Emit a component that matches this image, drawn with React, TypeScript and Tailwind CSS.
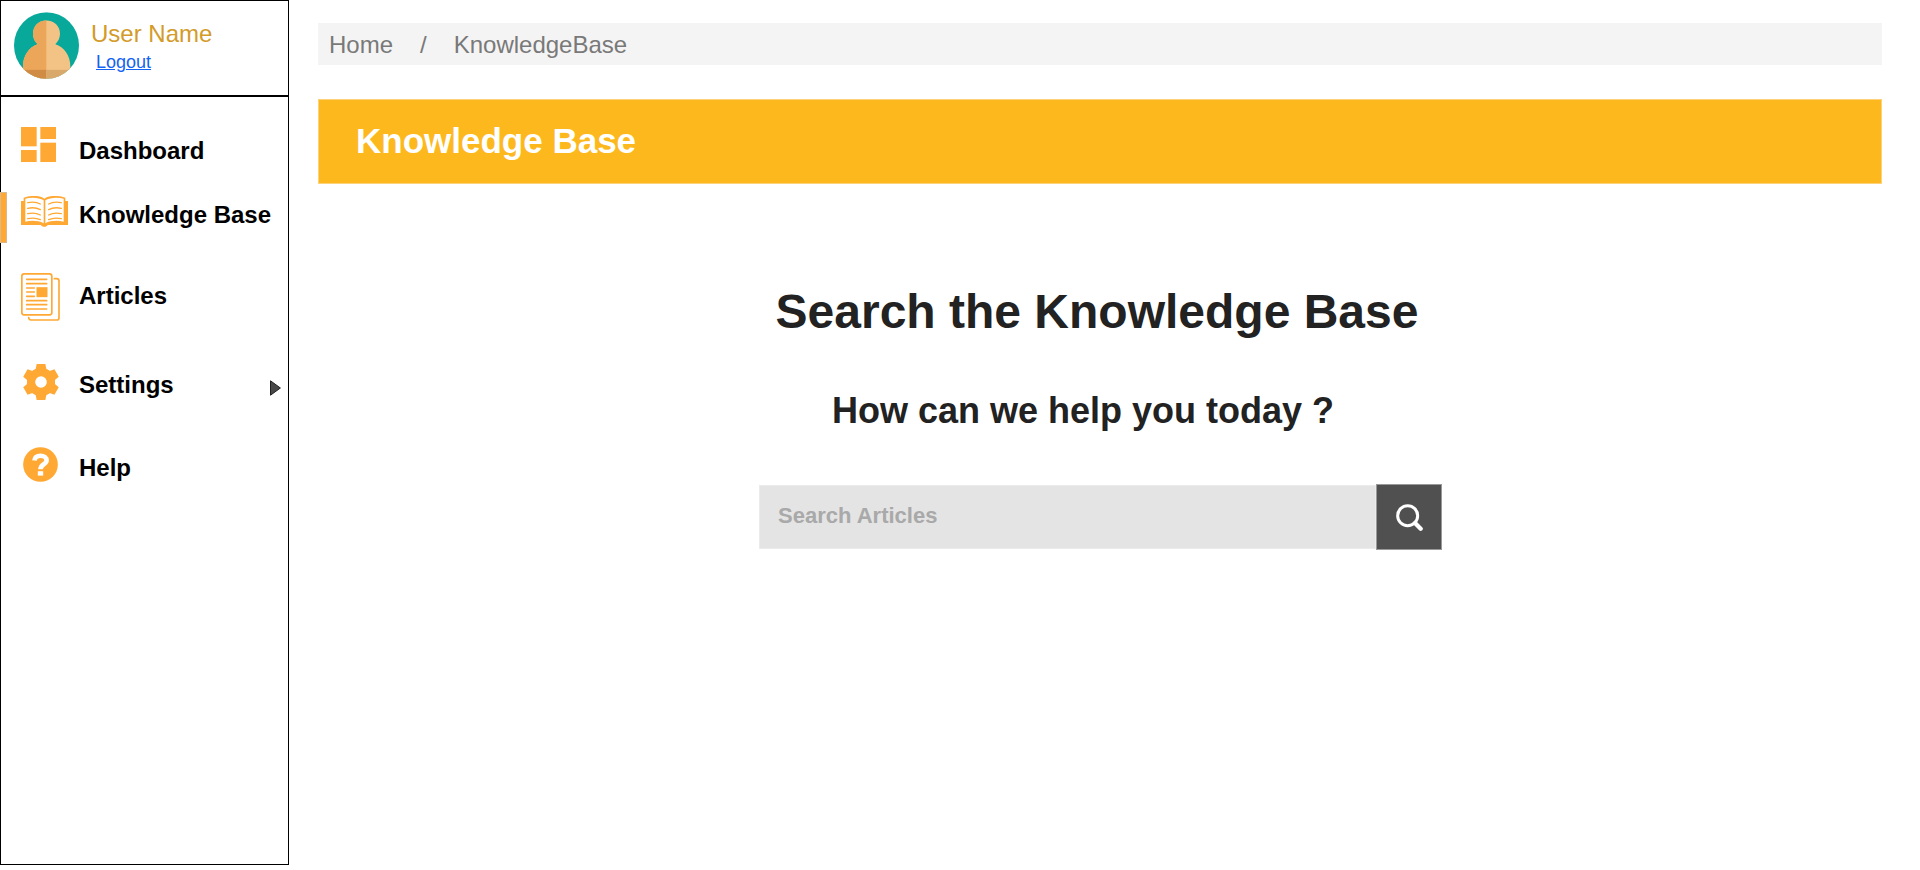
import type { ReactNode } from "react";

function Avatar() {
  const figure =
    "M97 25c24 0 41 17 41 40 0 13-6 24-14 31 26 8 45 33 45 66v38H27v-38c0-33 19-58 44-66-9-7-14-18-14-31 0-23 16-40 40-40z";
  return (
    <svg viewBox="0 0 195 200" className="h-[67px] w-[65px] shrink-0" role="img" aria-label="User avatar">
      <defs>
        <clipPath id="disc">
          <ellipse cx="97.5" cy="100" rx="97.5" ry="100" />
        </clipPath>
        <clipPath id="leftHalf">
          <rect x="0" y="0" width="97" height="200" />
        </clipPath>
      </defs>
      <g clipPath="url(#disc)">
        <rect width="195" height="200" fill="#08a89b" />
        <path d={figure} fill="#f2c385" />
        <path d={figure} fill="#eca659" clipPath="url(#leftHalf)" />
        <rect x="27" y="173" width="70" height="27" fill="#d08c45" />
        <rect x="97" y="173" width="72" height="27" fill="#d9a96c" />
      </g>
    </svg>
  );
}

function DashboardIcon() {
  return (
    <svg viewBox="0 0 105 105" className="size-[35px]" fill="#ffa834" aria-hidden="true">
      <rect width="47" height="58" />
      <rect y="69" width="47" height="36" />
      <rect x="58" width="47" height="36" />
      <rect x="58" y="47" width="47" height="58" />
    </svg>
  );
}

function BookIcon() {
  return (
    <svg viewBox="0 0 141 93" className="h-[31px] w-[47px]" aria-hidden="true">
      <path d="M0 15h8V5C28-2 54-3 70 8c16-11 43-10 63-3v10h8v72H80c-2 7-18 7-20 0H0z" fill="#ffa834" />
      <path d="M13 8c18-5 42-4 55 5v69C52 73 30 73 13 77zM128 8c-18-5-42-4-55 5v69c16-9 38-9 55-5z" fill="#fff" />
      <g fill="none" stroke="#ffa834" strokeWidth="4" strokeLinecap="round">
        <path d="M20 20c14-3 27-2 38 4M20 37c14-3 27-2 38 4M20 53c14-3 27-2 38 4M20 68c14-3 27-2 38 3" />
        <path d="M121 20c-14-3-27-2-38 4M121 37c-14-3-27-2-38 4M121 53c-14-3-27-2-38 4M121 68c-14-3-27-2-38 3" />
      </g>
    </svg>
  );
}

function ArticlesIcon() {
  return (
    <svg viewBox="0 0 117 144" className="h-12 w-[39px]" fill="none" stroke="#ffa834" strokeWidth="5" strokeLinecap="round" aria-hidden="true">
      <rect x="2.5" y="2.5" width="90" height="123" rx="7" />
      <path d="M100 17h7q7 0 7 7v110q0 7-7 7H30q-6 0-7-7" />
      <path d="M17 19h60M17 32h60M17 45h23M17 57h23M17 70h23M17 83h60M17 95h60M17 108h60" />
      <rect x="49" y="45" width="28" height="25" fill="#ffa834" />
    </svg>
  );
}

function SettingsIcon() {
  return (
    <svg viewBox="-54 -54 108 108" className="ml-0.5 size-9" fill="#ffa834" aria-hidden="true">
      <circle r="28" fill="none" stroke="#ffa834" strokeWidth="21" />
      {[0, 60, 120, 180, 240, 300].map((angle) => (
        <path key={angle} transform={`rotate(${angle})`} d="M-13-54h26l3 15 12 7-10 13h-36l-10-13 12-7z" />
      ))}
    </svg>
  );
}

function HelpIcon() {
  return (
    <svg viewBox="-52 -52 104 104" className="ml-0.5 size-[35px]" aria-hidden="true">
      <circle r="51.5" fill="#ffa834" />
      <path d="M-18-12C-17-21-10-26 0-26c11 0 18 6 18 14C18-1 0-1 0 14" fill="none" stroke="#fff" strokeWidth="14" />
      <rect x="-8" y="20" width="16" height="13" fill="#fff" />
    </svg>
  );
}

type NavItem = {
  label: string;
  icon: ReactNode;
  row: string;
  cell: string;
  active?: boolean;
  submenu?: boolean;
};

const items: NavItem[] = [
  { label: "Dashboard", icon: <DashboardIcon />, row: "h-16", cell: "pb-3" },
  { label: "Knowledge Base", icon: <BookIcon />, row: "h-16", cell: "pb-1.5", active: true },
  { label: "Articles", icon: <ArticlesIcon />, row: "h-[98px]", cell: "pt-1" },
  { label: "Settings", icon: <SettingsIcon />, row: "h-20", cell: "pb-1", submenu: true },
  { label: "Help", icon: <HelpIcon />, row: "h-[86px]", cell: "pb-1.5" },
];

function Sidebar() {
  return (
    <aside className="flex w-[289px] shrink-0 flex-col border border-black">
      <div className="flex h-24 items-start gap-3 border-b-2 border-black pt-[11px] pl-[13px]">
        <Avatar />
        <div className="pt-1.5">
          <p className="text-2xl leading-8 text-[#d39b2a]">User Name</p>
          <a href="#logout" className="ml-[5px] block text-lg leading-6 text-[#1463f3] underline">
            Logout
          </a>
        </div>
      </div>
      <nav aria-label="Main" className="pt-[21px]">
        <ul>
          {items.map((item) => (
            <li key={item.label} className="relative">
              {item.active && <span className="absolute top-[10px] -left-px h-[51px] w-[7px] border border-[#d9b98f] bg-[#ffa834]" />}
              <a
                href={"#" + item.label.toLowerCase().replace(" ", "-")}
                aria-current={item.active ? "page" : undefined}
                className={"flex items-center pr-[7px] pl-5 text-2xl font-bold text-black " + item.row}
              >
                <span className={"w-[58px] shrink-0 " + item.cell}>{item.icon}</span>
                <span className="grow pt-0.5 whitespace-nowrap">{item.label}</span>
                {item.submenu && (
                  <svg viewBox="0 0 11 16" className="mt-2 h-4 w-[11px]" aria-hidden="true">
                    <path d="M.5.8 10.4 8 .5 15.2z" fill="#484848" stroke="#222" />
                  </svg>
                )}
              </a>
            </li>
          ))}
        </ul>
      </nav>
    </aside>
  );
}

export default function App() {
  return (
    <div className="flex min-h-screen bg-white pb-[5px] font-['Liberation_Sans',Arial,sans-serif]">
      <Sidebar />
      <main className="grow pt-[23px] pr-[38px] pl-[29px]">
        <nav aria-label="Breadcrumb" className="bg-[#f4f4f4] px-[11px]">
          <ol className="flex h-[42px] items-center pt-0.5 text-2xl text-[#797979]">
            <li>
              <a href="#home">Home</a>
            </li>
            <li aria-hidden="true" className="px-[27px]">/</li>
            <li aria-current="page">KnowledgeBase</li>
          </ol>
        </nav>
        <header className="mt-[34px] flex h-[85px] items-center border border-[#fdd27a] bg-[#fdb81e] px-[37px]">
          <h1 className="text-[35px] font-bold text-white">Knowledge Base</h1>
        </header>
        <section className="flex flex-col items-center pt-[98px] text-[#222]">
          <h2 className="pr-1.5 text-5xl leading-[60px] font-bold">Search the Knowledge Base</h2>
          <p className="mt-[47px] pr-[34px] text-4xl leading-[44px] font-bold">How can we help you today ?</p>
          <form role="search" className="ml-px mt-[51px] flex w-full max-w-[683px] items-center" onSubmit={(e) => e.preventDefault()}>
            <input
              type="text"
              aria-label="Search Articles"
              placeholder="Search Articles"
              className="h-16 min-w-0 grow border border-[#ebebeb] bg-[#e4e4e4] px-[18px] pb-0.5 text-[22px] font-bold text-[#222] outline-none placeholder:text-[#a9a9a9]"
            />
            <button
              type="submit"
              aria-label="Search"
              className="flex size-[66px] shrink-0 items-center justify-center border border-[#999] bg-[#505050]"
            >
              <svg viewBox="0 0 81 81" className="size-[27px]" fill="none" stroke="#fff" aria-hidden="true">
                <circle cx="35" cy="35" r="30" strokeWidth="9" />
                <path d="M57 57l17 17" strokeWidth="13" strokeLinecap="round" />
              </svg>
            </button>
          </form>
        </section>
      </main>
    </div>
  );
}
